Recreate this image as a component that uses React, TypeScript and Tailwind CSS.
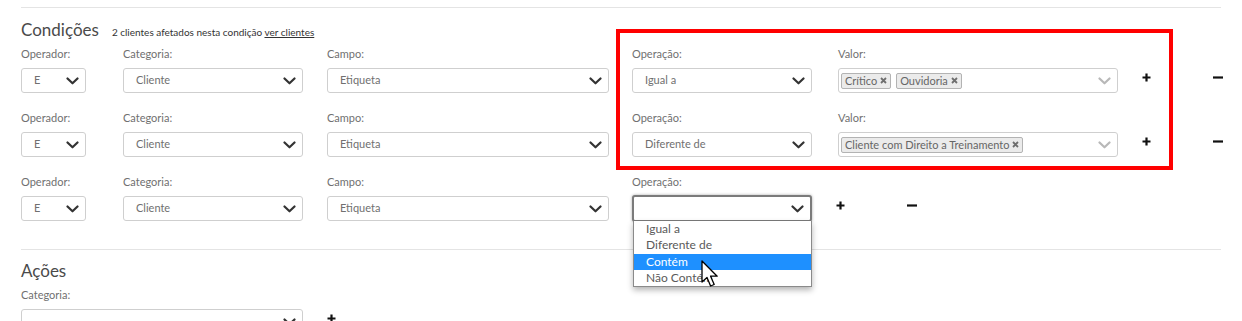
import React from "react";

const Chevron = ({ light = false }: { light?: boolean }) => (
  <svg width="13" height="8" viewBox="0 0 13 8" className="shrink-0">
    <path
      d="M1.5 1.5 L6.5 6.3 L11.5 1.5"
      fill="none"
      stroke={light ? "#b8b8b8" : "#333"}
      strokeWidth="2.2"
      strokeLinecap="round"
      strokeLinejoin="round"
    />
  </svg>
);

const PlusBtn = () => (
  <svg width="9" height="9" viewBox="0 0 9 9" className="mt-[5px] shrink-0">
    <path d="M4.5 0.5 V8.5 M0.5 4.5 H8.5" stroke="#111" strokeWidth="2.2" />
  </svg>
);

const MinusBtn = () => (
  <svg width="10" height="3" viewBox="0 0 10 3" className="mt-[8px] shrink-0">
    <path d="M0 1.5 H10" stroke="#111" strokeWidth="2.2" />
  </svg>
);

interface SelectProps {
  value?: string;
  className?: string;
  light?: boolean;
  children?: React.ReactNode;
}

const Select: React.FC<SelectProps> = ({ value, className = "", light, children }) => (
  <div
    className={`h-[25px] flex items-center justify-between border border-[#cfcfcf] rounded-[3px] bg-white ${className}`}
  >
    {children ? (
      <div className="flex items-center gap-[5px] pl-[2px]">{children}</div>
    ) : (
      <span className="pl-[12px] text-[11px] text-[#707070]">{value}</span>
    )}
    <div className="pr-[6px] flex items-center">
      <Chevron light={light} />
    </div>
  </div>
);

const Tag = ({ label }: { label: string }) => (
  <span className="h-[16px] flex items-center gap-[3px] px-[3px] border border-[#b3b3b3] bg-[#ebebeb] rounded-[2px] text-[11px] text-[#666] leading-none">
    {label}
    <svg width="7" height="7" viewBox="0 0 7 7">
      <path d="M1 1 L6 6 M6 1 L1 6" stroke="#6e6e6e" strokeWidth="1.8" />
    </svg>
  </span>
);

const Field = ({
  label,
  className = "",
  children,
}: {
  label: string;
  className?: string;
  children: React.ReactNode;
}) => (
  <div className={`flex flex-col shrink-0 ${className}`}>
    <span className="h-[14px] leading-[14px] text-[11px] text-[#707070]">{label}</span>
    <div className="mt-[7px]">{children}</div>
  </div>
);

const options = ["Igual a", "Diferente de", "Contém", "Não Contém"];

const ConditionRow = ({
  operation,
  tags,
  open,
}: {
  operation?: string;
  tags?: string[];
  open?: boolean;
}) => (
  <div className="flex items-start">
    <Field label="Operador:" className="w-[65px]">
      <Select value="E" />
    </Field>
    <Field label="Categoria:" className="w-[180px] ml-[37px]">
      <Select value="Cliente" />
    </Field>
    <Field label="Campo:" className="w-[282px] ml-[24px]">
      <Select value="Etiqueta" />
    </Field>
    <Field label="Operação:" className="w-[180px] ml-[23px]">
      {open ? (
        <div className="relative">
          <div className="h-[27px] -mt-[1px] flex items-center justify-end pr-[6px] border-2 border-[#7b7b7b] rounded-[3px] bg-white shadow-[0_0_3px_rgba(0,0,0,0.35)]">
            <Chevron />
          </div>
          <div className="absolute left-[1px] right-0 top-[26px] h-[66px] overflow-hidden bg-white border-x border-b border-[#8a8a8a] shadow-[0_3px_6px_rgba(0,0,0,0.3)] z-10">
            {options.map((o) => (
              <div
                key={o}
                className={`h-[16.3px] leading-[16px] pl-[12px] text-[12px] ${
                  o === "Contém" ? "bg-[#1e90ff] text-white" : "text-[#5a5a5a]"
                }`}
              >
                {o}
              </div>
            ))}
          </div>
        </div>
      ) : (
        <Select value={operation} />
      )}
    </Field>
    {tags && (
      <Field label="Valor:" className="w-[280px] ml-[26px]">
        <Select light>
          {tags.map((t) => (
            <Tag key={t} label={t} />
          ))}
        </Select>
      </Field>
    )}
    <div className="flex mt-[21px] ml-[24px] gap-[62px]">
      <PlusBtn />
      <MinusBtn />
    </div>
  </div>
);

export default function App() {
  return (
    <div className="relative w-[1242px] h-[321px] overflow-hidden bg-white font-['Lato',sans-serif]">
      <div className="mx-[21px] mt-[7px] border-t border-[#e4e4e4]">
        <div className="mt-[11px] h-[22px] flex items-baseline gap-[13px]">
          <span className="text-[17px] text-[#4a4a4a] leading-[22px]">Condições</span>
          <span className="text-[10px] text-[#333]">
            2 clientes afetados nesta condição <span className="underline">ver clientes</span>
          </span>
        </div>
        <div className="mt-[6px] flex flex-col gap-[18px]">
          <ConditionRow operation="Igual a" tags={["Crítico", "Ouvidoria"]} />
          <ConditionRow operation="Diferente de" tags={["Cliente com Direito a Treinamento"]} />
          <ConditionRow open />
        </div>
        <div className="mt-[27px] border-t border-[#e4e4e4]">
          <div className="mt-[10px] h-[22px] leading-[22px] text-[17px] text-[#4a4a4a]">Ações</div>
          <div className="mt-[6px] h-[14px] leading-[14px] text-[11px] text-[#707070]">Categoria:</div>
          <div className="mt-[7px] flex items-start">
            <Select className="w-[282px]" />
            <div className="ml-[24px]">
              <PlusBtn />
            </div>
          </div>
        </div>
      </div>

      {/* annotation box */}
      <div className="absolute left-[616px] top-[29px] w-[557px] h-[141px] border-4 border-[#ff0000] pointer-events-none" />

      {/* mouse cursor */}
      <svg
        className="absolute left-[701px] top-[260px] z-20"
        width="20"
        height="28"
        viewBox="0 0 20 28"
      >
        <path
          d="M1 1 L1 22 L6 17.5 L9.6 26 L13.2 24.5 L9.6 16.2 L16.2 16.2 Z"
          fill="#fff"
          stroke="#000"
          strokeWidth="1.3"
          strokeLinejoin="round"
        />
      </svg>
    </div>
  );
}
